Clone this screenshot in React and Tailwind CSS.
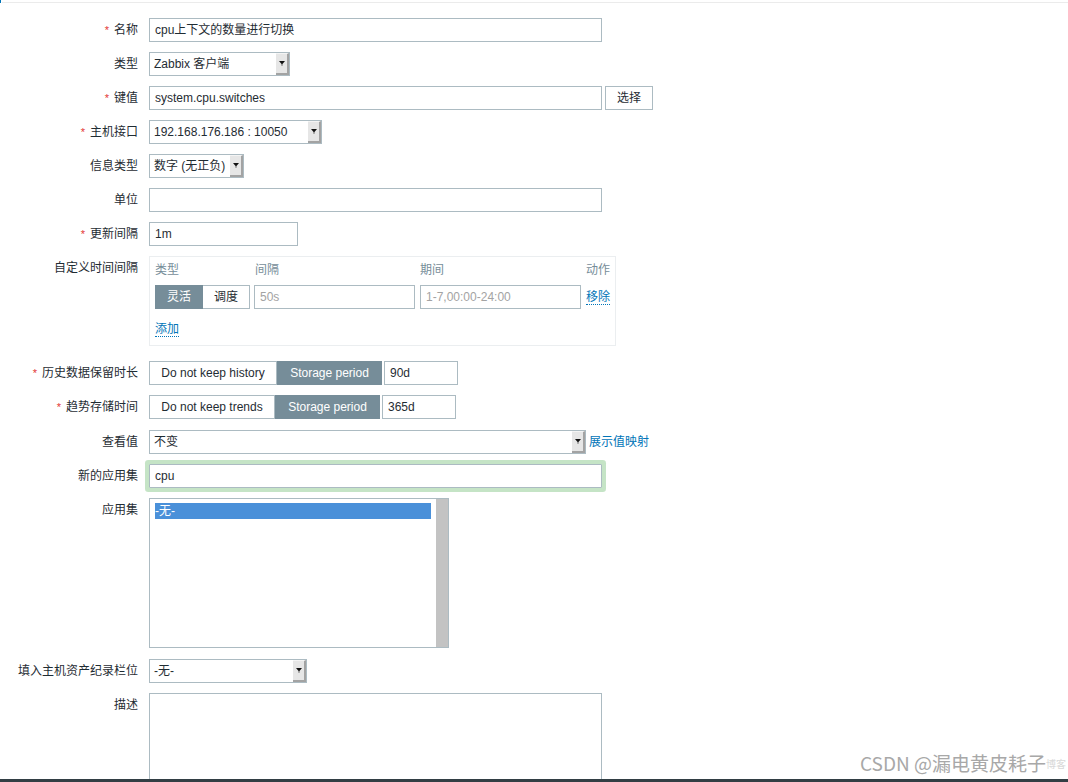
import React from "react";

function Label({ req, children }) {
  return (
    <div className="w-[138px] shrink-0 text-right leading-[24px] h-[24px] text-[#1f2c33] whitespace-nowrap">
      {req && <span className="text-[#e33734] mr-[5px] text-[11px]">*</span>}
      {children}
    </div>
  );
}

function Row({ label, req, children, className = "" }) {
  return (
    <div className={`flex ${className}`}>
      <Label req={req}>{label}</Label>
      <div className="ml-[11px] flex items-start">{children}</div>
    </div>
  );
}

function Input({ className = "", value, placeholder }) {
  return (
    <div
      className={`h-[24px] border border-[#acbbc2] bg-white pl-[5px] flex items-center whitespace-nowrap ${className}`}
    >
      {value ? (
        <span className="text-[#1f2c33]">{value}</span>
      ) : (
        <span className="text-[#a3a3a3]">{placeholder}</span>
      )}
    </div>
  );
}

function Arrow() {
  return (
    <div className="w-[13px] h-full shrink-0 bg-[#e6e6e6] border-r-2 border-b-2 border-[#a3a3a3] border-t border-t-[#f4f4f4] flex items-center justify-center">
      <svg width="6" height="5" viewBox="0 0 6 5">
        <polygon points="0,0 6,0 3,3.5" fill="#111" />
        <rect x="2.5" y="3.5" width="1" height="1" fill="#111" />
      </svg>
    </div>
  );
}

function Select({ className = "", value }) {
  return (
    <div
      className={`h-[24px] border border-[#acbbc2] bg-white flex items-stretch ${className}`}
    >
      <div className="flex-1 pl-[4px] flex items-center text-[#1f2c33] whitespace-nowrap overflow-hidden">
        {value}
      </div>
      <Arrow />
    </div>
  );
}

function Seg({ active, className = "", children }) {
  return (
    <div
      className={`h-[24px] flex items-center justify-center whitespace-nowrap border ${
        active
          ? "bg-[#768d99] border-[#768d99] text-white"
          : "bg-white border-[#acbbc2] text-[#1f2c33]"
      } ${className}`}
    >
      {children}
    </div>
  );
}

export default function App() {
  return (
    <div className="w-[1068px] h-[782px] relative overflow-hidden bg-white flex flex-col text-[12px] font-['Liberation_Sans','Noto_Sans_CJK_SC',sans-serif]">
      {/* top line */}
      <div className="flex items-end h-[3px] shrink-0">
        <div className="w-px h-[3px] bg-[#0275b8]" />
        <div className="w-px" />
        <div className="flex-1 h-px bg-[#ebebeb]" />
      </div>

      <div className="flex-1 overflow-hidden pt-[15px]">
        <Row label="名称" req>
          <Input className="w-[453px]" value="cpu上下文的数量进行切换" />
        </Row>
        <Row label="类型" className="mt-[10px]">
          <Select className="w-[141px]" value="Zabbix 客户端" />
        </Row>
        <Row label="键值" req className="mt-[10px]">
          <Input className="w-[453px]" value="system.cpu.switches" />
          <div className="ml-[3px] w-[48px] h-[24px] border border-[#acbbc2] bg-white flex items-center justify-center text-[#1f2c33]">
            选择
          </div>
        </Row>
        <Row label="主机接口" req className="mt-[10px]">
          <Select className="w-[173px]" value="192.168.176.186 : 10050" />
        </Row>
        <Row label="信息类型" className="mt-[10px]">
          <Select className="w-[95px]" value="数字 (无正负)" />
        </Row>
        <Row label="单位" className="mt-[10px]">
          <Input className="w-[453px]" value="" placeholder="" />
        </Row>
        <Row label="更新间隔" req className="mt-[10px]">
          <Input className="w-[149px]" value="1m" />
        </Row>
        <Row label="自定义时间间隔" className="mt-[10px]">
          <div className="w-[467px] border border-[#ebeef0] pt-[5px] pb-[10px] pl-[5px]">
            <div className="flex h-[16px] leading-[16px] text-[#768d99]">
              <div className="w-[99px]">类型</div>
              <div className="w-[166px] pl-[1px]">间隔</div>
              <div className="w-[166px]">期间</div>
              <div>动作</div>
            </div>
            <div className="flex mt-[7px] items-center">
              <div className="w-[99px] flex">
                <Seg active className="w-[48px]">灵活</Seg>
                <Seg className="w-[47px] border-l-0">调度</Seg>
              </div>
              <div className="w-[166px]">
                <Input className="w-[161px]" placeholder="50s" />
              </div>
              <div className="w-[166px]">
                <Input className="w-[161px]" placeholder="1-7,00:00-24:00" />
              </div>
              <div>
                <span className="inline-block leading-[14px] text-[#0275b8] border-b border-dotted border-[#0275b8]">
                  移除
                </span>
              </div>
            </div>
            <div className="mt-[11px] h-[15px]">
              <span className="inline-block leading-[14px] text-[#0275b8] border-b border-dotted border-[#0275b8]">
                添加
              </span>
            </div>
          </div>
        </Row>
        <Row label="历史数据保留时长" req className="mt-[15px]">
          <Seg className="w-[128px]">Do not keep history</Seg>
          <Seg active className="w-[105px]">Storage period</Seg>
          <Input className="ml-[2px] w-[74px]" value="90d" />
        </Row>
        <Row label="趋势存储时间" req className="mt-[10px]">
          <Seg className="w-[126px]">Do not keep trends</Seg>
          <Seg active className="w-[105px]">Storage period</Seg>
          <Input className="ml-[2px] w-[74px]" value="365d" />
        </Row>
        <Row label="查看值" className="mt-[11px]">
          <Select className="w-[437px]" value="不变" />
          <span className="ml-[3px] leading-[24px] text-[#0275b8] whitespace-nowrap">
            展示值映射
          </span>
        </Row>
        <Row label="新的应用集" className="mt-[10px]">
          <Input
            className="w-[453px] shadow-[0_0_0_4px_#c5e4c6] rounded-[1px]"
            value="cpu"
          />
        </Row>
        <Row label="应用集" className="mt-[10px]">
          <div className="w-[300px] h-[150px] border border-[#acbbc2] bg-white flex">
            <div className="flex-1 pt-[4px] px-[5px]">
              <div className="h-[16px] leading-[16px] bg-[#4a90d9] text-white">
                -无-
              </div>
            </div>
            <div className="w-[12px] h-full bg-[#c3c3c3]" />
          </div>
        </Row>
        <Row label="填入主机资产纪录栏位" className="mt-[11px]">
          <Select className="w-[158px]" value="-无-" />
        </Row>
        <Row label="描述" className="mt-[10px]">
          <div className="w-[453px] h-[120px] border border-[#acbbc2] bg-white" />
        </Row>
      </div>

      <div className="h-[3px] shrink-0 bg-[#323e44]" />

      {/* watermark */}
      <div className="absolute left-[860px] top-[751px] text-[19px] leading-[24px] text-[#a8a8a8] whitespace-nowrap font-['Noto_Sans_CJK_SC',sans-serif] [text-shadow:0_0_1px_#ffffff]">
        CSDN @漏电黄皮耗子
      </div>
      <div className="absolute left-[1046px] top-[757px] text-[10px] leading-[14px] text-[#d8d8d8] whitespace-nowrap font-['Noto_Sans_CJK_SC',sans-serif]">
        博客
      </div>
    </div>
  );
}
